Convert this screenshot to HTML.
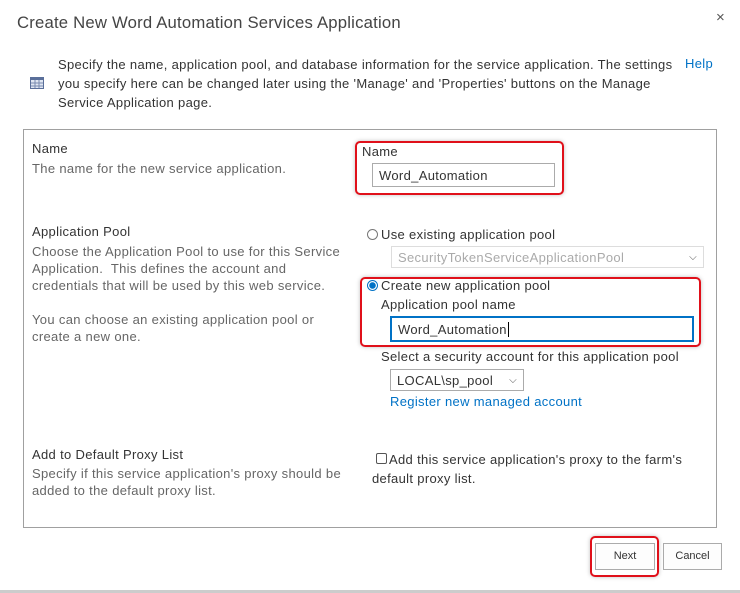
<!DOCTYPE html>
<html><head><style>
body{margin:0;width:740px;height:593px;background:#fff;font-family:"Liberation Sans",sans-serif;color:#333;position:relative;overflow:hidden}
.a{position:absolute;white-space:nowrap;font-size:13px;line-height:17px;letter-spacing:0.33px}
.g{color:#666}
.r{position:absolute;border:2px solid #e0101a;border-radius:5px;box-shadow:0 0 4px rgba(0,0,0,.25)}
.in{position:absolute;border:1px solid #ababab;background:#fff;box-sizing:border-box;font-size:13px;padding:4px 6px;line-height:15px;letter-spacing:0.33px}
.btn{position:absolute;border:1px solid #ababab;background:#fdfdfd;font-size:11px;text-align:center;box-sizing:border-box;line-height:24px}
.rad{position:absolute;width:9px;height:9px;border:1px solid #777;border-radius:50%}
</style></head><body>
<div class="a" style="left:17px;top:11px;font-size:16.7px;line-height:24px;color:#444;letter-spacing:0.2px">Create New Word Automation Services Application</div>
<div class="a" style="left:716px;top:9px;font-size:15px;color:#555">×</div>
<svg style="position:absolute;left:30px;top:77px" width="14" height="12"><rect x="0.5" y="0.5" width="13" height="11" fill="#dfe6f2" stroke="#5a6f9a"/><rect x="1" y="1" width="12" height="2" fill="#5a6f9a"/><path d="M5 3v8M9 3v8M1 6h12M1 9h12" stroke="#7a8bb0"/></svg>
<div class="a" style="left:58px;top:55px;line-height:19px">Specify the name, application pool, and database information for the service application. The settings<br>you specify here can be changed later using the 'Manage' and 'Properties' buttons on the Manage<br>Service Application page.</div>
<div class="a" style="left:685px;top:55px;color:#0072c6">Help</div>
<div style="position:absolute;left:23px;top:129px;width:692px;height:397px;border:1px solid #a0a0a0"></div>
<div class="a" style="left:32px;top:140px">Name</div>
<div class="a g" style="left:32px;top:160px">The name for the new service application.</div>
<div class="r" style="left:355px;top:141px;width:205px;height:50px"></div>
<div class="a" style="left:362px;top:143px">Name</div>
<div class="in" style="left:372px;top:163px;width:183px;height:24px">Word_Automation</div>
<div class="a" style="left:32px;top:223px">Application Pool</div>
<div class="a g" style="left:32px;top:243px">Choose the Application Pool to use for this Service<br>Application.&nbsp; This defines the account and<br>credentials that will be used by this web service.<br><br>You can choose an existing application pool or<br>create a new one.</div>
<div class="rad" style="left:367px;top:229px"></div>
<div class="a" style="left:381px;top:226px">Use existing application pool</div>
<div class="in" style="left:391px;top:246px;width:313px;height:22px;border-color:#ddd;color:#aaa;padding-top:3px">SecurityTokenServiceApplicationPool<span style="position:absolute;right:6px;color:#555;font-size:10px">⌵</span></div>
<div class="r" style="left:360px;top:277px;width:337px;height:66px"></div>
<div class="rad" style="left:367px;top:280px;border-color:#0072c6;background:radial-gradient(circle,#0072c6 3px,#fff 3.5px)"></div>
<div class="a" style="left:381px;top:277px">Create new application pool</div>
<div class="a" style="left:381px;top:296px">Application pool name</div>
<div class="in" style="left:390px;top:316px;width:304px;height:26px;border:2px solid #0072c6;padding-top:4px">Word_Automation<span style="border-left:1px solid #000;margin-left:1px"></span></div>
<div class="a" style="left:381px;top:348px">Select a security account for this application pool</div>
<div class="in" style="left:390px;top:369px;width:134px;height:22px;padding-top:3px">LOCAL\sp_pool<span style="position:absolute;right:6px;color:#555;font-size:10px">⌵</span></div>
<div class="a" style="left:390px;top:393px;color:#0072c6">Register new managed account</div>
<div class="a" style="left:32px;top:446px">Add to Default Proxy List</div>
<div class="a g" style="left:32px;top:465px">Specify if this service application's proxy should be<br>added to the default proxy list.</div>
<div style="position:absolute;left:376px;top:453px;width:9px;height:9px;border:1px solid #555;border-radius:2px"></div>
<div class="a" style="left:389px;top:451px">Add this service application's proxy to the farm's</div>
<div class="a" style="left:372px;top:470px">default proxy list.</div>
<div class="r" style="left:590px;top:536px;width:65px;height:37px"></div>
<div class="btn" style="left:595px;top:543px;width:60px;height:27px">Next</div>
<div class="btn" style="left:663px;top:543px;width:59px;height:27px">Cancel</div>
<div style="position:absolute;left:0;top:590px;width:740px;height:3px;background:#ccc"></div>
</body></html>
